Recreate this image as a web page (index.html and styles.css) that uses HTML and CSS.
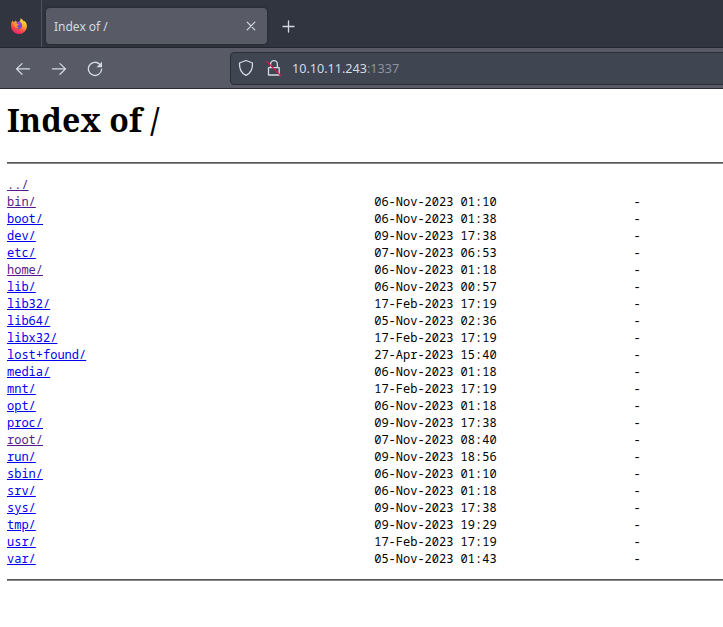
FILE: index.html
```html
<!DOCTYPE html>
<html lang="en">
<head>
<meta charset="utf-8">
<title>Index of /</title>
<link rel="stylesheet" href="styles.css">
</head>
<body>
<header class="tabs">
  <div class="pinned">
    <svg class="firefox" width="18" height="18" viewBox="0 0 18 18">
      <defs>
        <linearGradient id="flame" x1="0.8" y1="0" x2="0.3" y2="1"><stop offset="0" stop-color="#fff04a"/><stop offset=".4" stop-color="#ffac27"/><stop offset=".7" stop-color="#ff4b43"/><stop offset="1" stop-color="#ed1b72"/></linearGradient>
        <linearGradient id="globe" x1="0" y1="0" x2="0" y2="1"><stop offset="0" stop-color="#a04be0"/><stop offset="1" stop-color="#6544d8"/></linearGradient>
      </defs>
      <path fill="url(#flame)" d="M1.8 4.8 2.4 3.5 3.5 5 5 4.6 6 3.2 6.5 5.1 8.5 5.6 10.3 3.8 10.6 1.2C12.3 2 13 3.2 13.8 4.4L14.6 4C16.2 5.5 17 7.6 16.9 9.5A7.9 7.5 0 0 1 1.1 9.5C1 7.7 1.2 6 1.8 4.8Z"/>
      <path fill="url(#globe)" d="M6.5 5.2C8 4.3 10.4 4.7 11.4 6.1 13 8.3 12 11.6 9.2 12 6.8 12.2 5.3 10.8 5.1 9.1L7.4 9.2 8.7 7.6 6.7 7Z"/>
      <path fill="#ff9230" d="M4.1 6.3 6.7 6.8 8.7 7.5 7.6 8.5 6.6 9.6C7.1 10.5 8.3 10.7 9.3 10.3 8 12.4 4.7 11.3 4.1 8.5Z"/>
    </svg>
  </div>
  <div class="tab"><span>Index of /</span>
    <svg width="10" height="10" viewBox="0 0 10 10"><path d="M1.2 1.2 8.8 8.8M8.8 1.2 1.2 8.8"/></svg>
  </div>
  <svg class="plus" width="13" height="13" viewBox="0 0 13 13"><path d="M6.5 1V12M1 6.5H12"/></svg>
</header>
<nav class="toolbar">
  <svg width="16" height="17" viewBox="0 0 16 17"><path d="M14.5 8.9H1.5M7 3.6 1.5 8.9 7 14.2"/></svg>
  <svg width="16" height="17" viewBox="0 0 16 17"><path d="M1.5 8.9H14.5M9 3.6 14.5 8.9 9 14.2"/></svg>
  <svg width="16" height="17" viewBox="0 0 16 17"><path d="M12.7 4.2A6.6 6.6 0 1 0 14.6 9.2"/><path class="solid" d="M15 1.8V7.3H9.5Z"/></svg>
  <div class="address">
    <svg width="16" height="18" viewBox="0 0 16 18"><path d="M8 1.5 14.5 4C14.8 9.7 12.8 14.2 8 16.4 3.2 14.2 1.2 9.7 1.5 4Z"/></svg>
    <svg class="lock" width="16" height="18" viewBox="0 0 16 18"><path d="M4.6 8V5.2A3.4 3.6 0 0 1 11.4 5.2V8M2.5 8.6H13.2V16H2.5Z"/><path class="strike" d="M1.2 3 14.7 16.6"/></svg>
    <span class="url">10.10.11.243<span class="port">:1337</span></span>
  </div>
</nav>
<main>
<h1>Index of <span class="slash">/</span></h1>
<hr>
<div class="listing">
<a class="visited" href="#">../</a><span></span><span></span>
<a class="visited" href="#">bin/</a><span>06-Nov-2023 01:10</span><span>-</span>
<a href="#">boot/</a><span>06-Nov-2023 01:38</span><span>-</span>
<a href="#">dev/</a><span>09-Nov-2023 17:38</span><span>-</span>
<a href="#">etc/</a><span>07-Nov-2023 06:53</span><span>-</span>
<a class="visited" href="#">home/</a><span>06-Nov-2023 01:18</span><span>-</span>
<a href="#">lib/</a><span>06-Nov-2023 00:57</span><span>-</span>
<a href="#">lib32/</a><span>17-Feb-2023 17:19</span><span>-</span>
<a href="#">lib64/</a><span>05-Nov-2023 02:36</span><span>-</span>
<a href="#">libx32/</a><span>17-Feb-2023 17:19</span><span>-</span>
<a href="#">lost+found/</a><span>27-Apr-2023 15:40</span><span>-</span>
<a href="#">media/</a><span>06-Nov-2023 01:18</span><span>-</span>
<a href="#">mnt/</a><span>17-Feb-2023 17:19</span><span>-</span>
<a href="#">opt/</a><span>06-Nov-2023 01:18</span><span>-</span>
<a href="#">proc/</a><span>09-Nov-2023 17:38</span><span>-</span>
<a class="visited" href="#">root/</a><span>07-Nov-2023 08:40</span><span>-</span>
<a href="#">run/</a><span>09-Nov-2023 18:56</span><span>-</span>
<a href="#">sbin/</a><span>06-Nov-2023 01:10</span><span>-</span>
<a href="#">srv/</a><span>06-Nov-2023 01:18</span><span>-</span>
<a href="#">sys/</a><span>09-Nov-2023 17:38</span><span>-</span>
<a href="#">tmp/</a><span>09-Nov-2023 19:29</span><span>-</span>
<a href="#">usr/</a><span>17-Feb-2023 17:19</span><span>-</span>
<a href="#">var/</a><span>05-Nov-2023 01:43</span><span>-</span>
</div>
<hr>
</main>
</body>
</html>
```
FILE: styles.css
```css
* { box-sizing: border-box; }
body { margin: 0; background: #fff; color: #000; overflow: hidden; }
svg { flex: none; fill: none; stroke: #d3dae3; stroke-width: 1.3; stroke-linecap: round; stroke-linejoin: round; }
.firefox { stroke: none; }
.solid { fill: #d3dae3; stroke: none; }
.tabs { height: 48px; display: flex; align-items: center; background: #31353f; border-bottom: 1px solid #22252e; }
.pinned { width: 42px; height: 47px; padding: 17px 0 0 10px; border-right: 1px solid #4d515b; }
.tab { width: 221px; height: 36px; margin: 5px 0 0 4px; padding: 0 11px 0 8px; display: flex; align-items: center; justify-content: space-between; border-radius: 4px; background: #585a66; box-shadow: 0 0 3px #20232b; color: #d3dae3; font: 12px/18px "Noto Sans", sans-serif; }
.tab span { padding-top: 2px; }
.tab svg { stroke-width: 1.2; }
.plus { margin: 6px 0 0 15px; }
.toolbar { height: 41px; padding-left: 15px; display: flex; align-items: center; gap: 20px; background: #585a66; border-bottom: 1px solid #2b2e39; }
.address { flex: 1; height: 33px; margin: 0 -6px 0 107px; padding-left: 7px; display: flex; align-items: center; background: #404552; border: 1px solid #2b2e39; border-radius: 4px; }
.lock { margin-left: 12px; }
.strike { stroke: #e2144a; }
.url { margin-left: 10px; padding-top: 2px; color: #d3dae3; font: 12.6px/18px "Noto Sans", sans-serif; }
.port { color: #8d929d; }
main { padding: 11px 0 0 7px; }
h1 { height: 40px; margin: 0 0 22px; font: bold 32px/40px "Noto Serif", "DejaVu Serif Condensed", "Liberation Serif", serif; white-space: nowrap; }
hr { height: 2px; margin: 0; border: 0; border-top: 1px solid #55565a; background: #88898b; }
.listing { display: grid; grid-template-columns: 367.2px 259.2px auto; grid-auto-rows: 17px; justify-items: start; margin: 12px 0; font: 12px/17px "Noto Sans Mono", "DejaVu Sans Mono", monospace; }
a { color: #0000ee; text-decoration: underline; }
.visited { color: #551a8b; }
```
